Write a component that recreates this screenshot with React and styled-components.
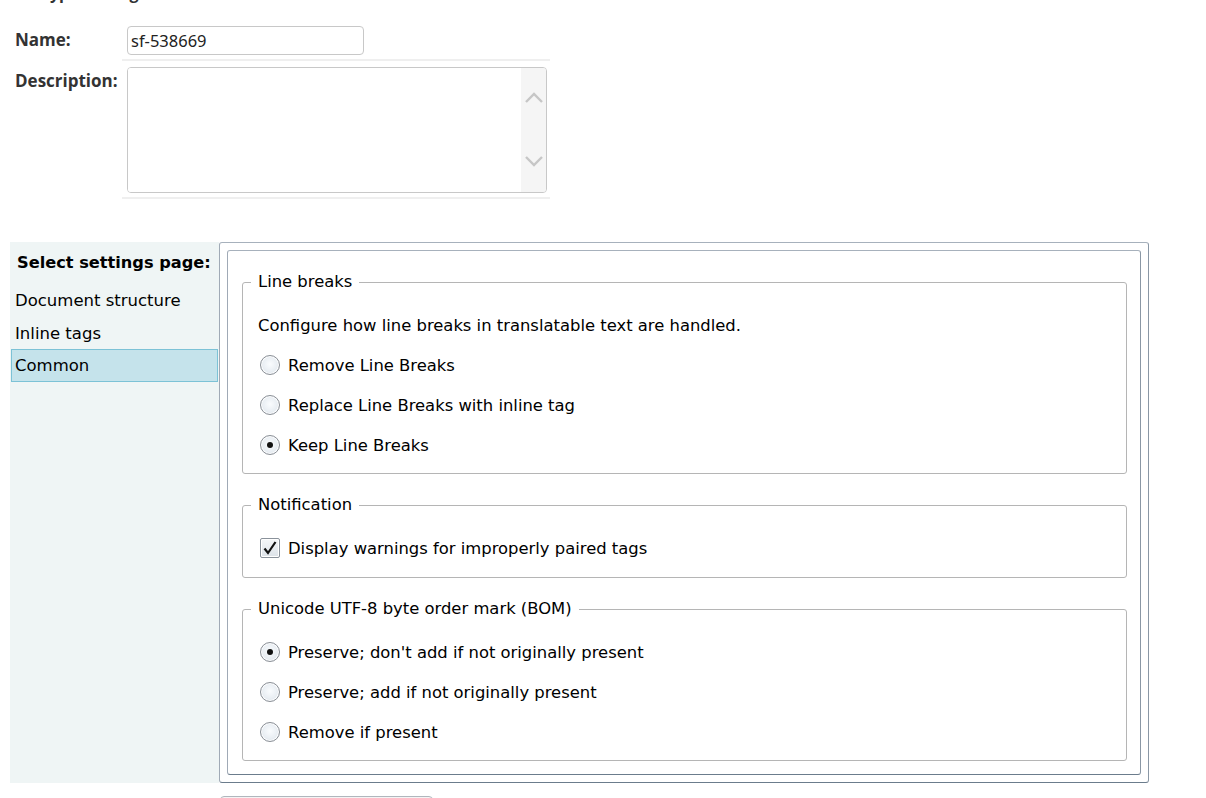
import React from "react";
import styled, { createGlobalStyle } from "styled-components";

const Global = createGlobalStyle`
  html, body { margin: 0; padding: 0; background: #fff; }
  body { font-family: "DejaVu Sans", Verdana, sans-serif; color: #000; overflow: hidden; }
  * { box-sizing: border-box; }
`;

const Page = styled.div`
  width: 1206px;
  height: 798px;
  overflow: hidden;
  padding-left: 15px;
`;

const PageTitle = styled.h2`
  margin: -17px 0 0 0;
  height: 20px;
  font-family: "Open Sans", "Noto Sans", sans-serif;
  font-weight: 700;
  font-size: 16px;
  line-height: 20px;
  color: #333;
`;

const FormRow = styled.div`
  display: grid;
  grid-template-columns: 107px 428px;
  align-items: start;
`;

const Label = styled.label`
  font-family: "Open Sans", "Noto Sans", sans-serif;
  font-weight: 700;
  font-size: 17px;
  line-height: 23px;
  color: #333;
  padding-top: ${(p) => p.$top}px;
`;

const Field = styled.div`
  padding: ${(p) => p.$pad};
  border-bottom: 2px solid #efefef;
`;

const TextInput = styled.input`
  display: block;
  margin-left: 5px;
  width: 237px;
  height: 29px;
  border: 1px solid #c8c8c8;
  border-radius: 4px;
  padding: 0 3px;
  font-family: "Noto Sans", "Open Sans", sans-serif;
  font-size: 16.5px;
  color: #222;
  outline: none;
`;

const AreaBox = styled.div`
  display: flex;
  margin-left: 5px;
  width: 420px;
  height: 126px;
  border: 1px solid #c8c8c8;
  border-radius: 4px;
  overflow: hidden;
`;

const Area = styled.textarea`
  flex: 1;
  border: none;
  resize: none;
  outline: none;
  overflow: hidden;
  font-family: "Noto Sans", sans-serif;
  font-size: 14px;
`;

const ScrollTrack = styled.div`
  width: 25px;
  background: #f5f5f5;
  display: flex;
  flex-direction: column;
  align-items: center;
  justify-content: space-between;
  padding: 24px 0 25px;
`;

const Chevron = ({ down }) => (
  <svg width="20" height="12" viewBox="0 0 20 12">
    <path
      d={down ? "M2 2 L10 10 L18 2" : "M2 10 L10 2 L18 10"}
      fill="none"
      stroke="#c6c6c6"
      strokeWidth="2.4"
    />
  </svg>
);

const Settings = styled.div`
  display: flex;
  margin-top: 43px;
  margin-left: -5px;
`;

const Sidebar = styled.nav`
  width: 209px;
  height: 541px;
  background: #eff5f5;
  padding: 11px 1px 0;
`;

const SideTitle = styled.div`
  font-weight: 700;
  font-size: 16.2px;
  line-height: 20px;
  padding-left: 6px;
  margin-bottom: 11px;
`;

const SideItem = styled.div`
  height: 33px;
  display: flex;
  align-items: center;
  padding-left: 3px;
  font-size: 16.5px;
  margin-top: ${(p) => (p.$active ? -1 : 0)}px;
  border: 1px solid ${(p) => (p.$active ? "#7cc2d6" : "transparent")};
  background: ${(p) => (p.$active ? "#c5e3eb" : "transparent")};
`;

const Column = styled.div`
  display: flex;
  flex-direction: column;
`;

const Panel = styled.div`
  width: 930px;
  height: 541px;
  border: 1px solid;
  border-color: #a7b1bc #8a97a5 #6b7c8c #a0aab6;
  border-radius: 3px;
  padding: 7px;
`;

const PanelInner = styled.div`
  height: 100%;
  border: 1px solid;
  border-color: #a7b1bc #8a97a5 #6b7c8c #a0aab6;
  border-radius: 3px;
  padding: 23px 13px 0 14px;
  display: flex;
  flex-direction: column;
  gap: 23px;
`;

const Group = styled.fieldset`
  margin: 0;
  border: 1px solid #b5b5b5;
  border-radius: 3px;
  padding: 15px 10px ${(p) => p.$pb || 8}px 17px;
`;

const Legend = styled.legend`
  margin-left: -9px;
  padding: 0 7px;
  font-size: 16.4px;
  line-height: 16px;
`;

const Row = styled.div`
  height: 40px;
  display: flex;
  align-items: center;
  font-size: 16.4px;
  margin-left: ${(p) => p.$shift || 0}px;
`;

const Radio = styled.span`
  width: 20px;
  height: 20px;
  border-radius: 50%;
  border: 1px solid #8a8f96;
  background: radial-gradient(circle at 50% 45%, #fafcfe 0%, #e9eef3 55%, #d6dde5 100%);
  box-shadow: inset 0 0 0 1px #ffffff;
  display: flex;
  align-items: center;
  justify-content: center;
  margin-right: 8px;
  flex-shrink: 0;
  &::after {
    content: "";
    width: 6px;
    height: 6px;
    border-radius: 50%;
    background: ${(p) => (p.$checked ? "#111" : "transparent")};
  }
`;

const Check = styled.span`
  width: 20px;
  height: 20px;
  border: 1px solid #8a929b;
  border-radius: 2px;
  background: linear-gradient(#f4f6f8, #dde3e9);
  box-shadow: inset 0 0 0 1px #fff;
  display: flex;
  align-items: center;
  justify-content: center;
  margin-right: 8px;
  flex-shrink: 0;
`;

const BottomButton = styled.div`
  margin-top: 13px;
  margin-left: 1px;
  width: 213px;
  height: 30px;
  border: 1px solid #b0b6bd;
  border-radius: 4px;
  background: #f4f4f4;
`;

const RadioRow = ({ checked, children }) => (
  <Row>
    <Radio $checked={checked} />
    {children}
  </Row>
);

export default function App() {
  return (
    <Page>
      <Global />
      <PageTitle>Filetype settings</PageTitle>
      <FormRow style={{ marginTop: 8 }}>
        <Label $top={17}>Name:</Label>
        <Field $pad="15px 0 4px">
          <TextInput defaultValue="sf-538669" />
        </Field>
      </FormRow>
      <FormRow>
        <Label $top={8}>Description:</Label>
        <Field $pad="6px 0 4px">
          <AreaBox>
            <Area />
            <ScrollTrack>
              <Chevron />
              <Chevron down />
            </ScrollTrack>
          </AreaBox>
        </Field>
      </FormRow>
      <Settings>
        <Sidebar>
          <SideTitle>Select settings page:</SideTitle>
          <SideItem>Document structure</SideItem>
          <SideItem>Inline tags</SideItem>
          <SideItem $active>Common</SideItem>
        </Sidebar>
        <Column>
          <Panel>
            <PanelInner>
              <Group>
                <Legend>Line breaks</Legend>
                <Row $shift={-2}>
                  Configure how line breaks in translatable text are handled.
                </Row>
                <RadioRow>Remove Line Breaks</RadioRow>
                <RadioRow>Replace Line Breaks with inline tag</RadioRow>
                <RadioRow checked>Keep Line Breaks</RadioRow>
              </Group>
              <Group $pb={9}>
                <Legend>Notification</Legend>
                <Row>
                  <Check>
                    <svg width="16" height="16" viewBox="0 0 16 16">
                      <path
                        d="M2.5 8.5 L6 13 L13.5 2"
                        fill="none"
                        stroke="#111"
                        strokeWidth="2.2"
                        strokeLinejoin="miter"
                      />
                    </svg>
                  </Check>
                  Display warnings for improperly paired tags
                </Row>
              </Group>
              <Group>
                <Legend>Unicode UTF-8 byte order mark (BOM)</Legend>
                <RadioRow checked>Preserve; don't add if not originally present</RadioRow>
                <RadioRow>Preserve; add if not originally present</RadioRow>
                <RadioRow>Remove if present</RadioRow>
              </Group>
            </PanelInner>
          </Panel>
          <BottomButton />
        </Column>
      </Settings>
    </Page>
  );
}
